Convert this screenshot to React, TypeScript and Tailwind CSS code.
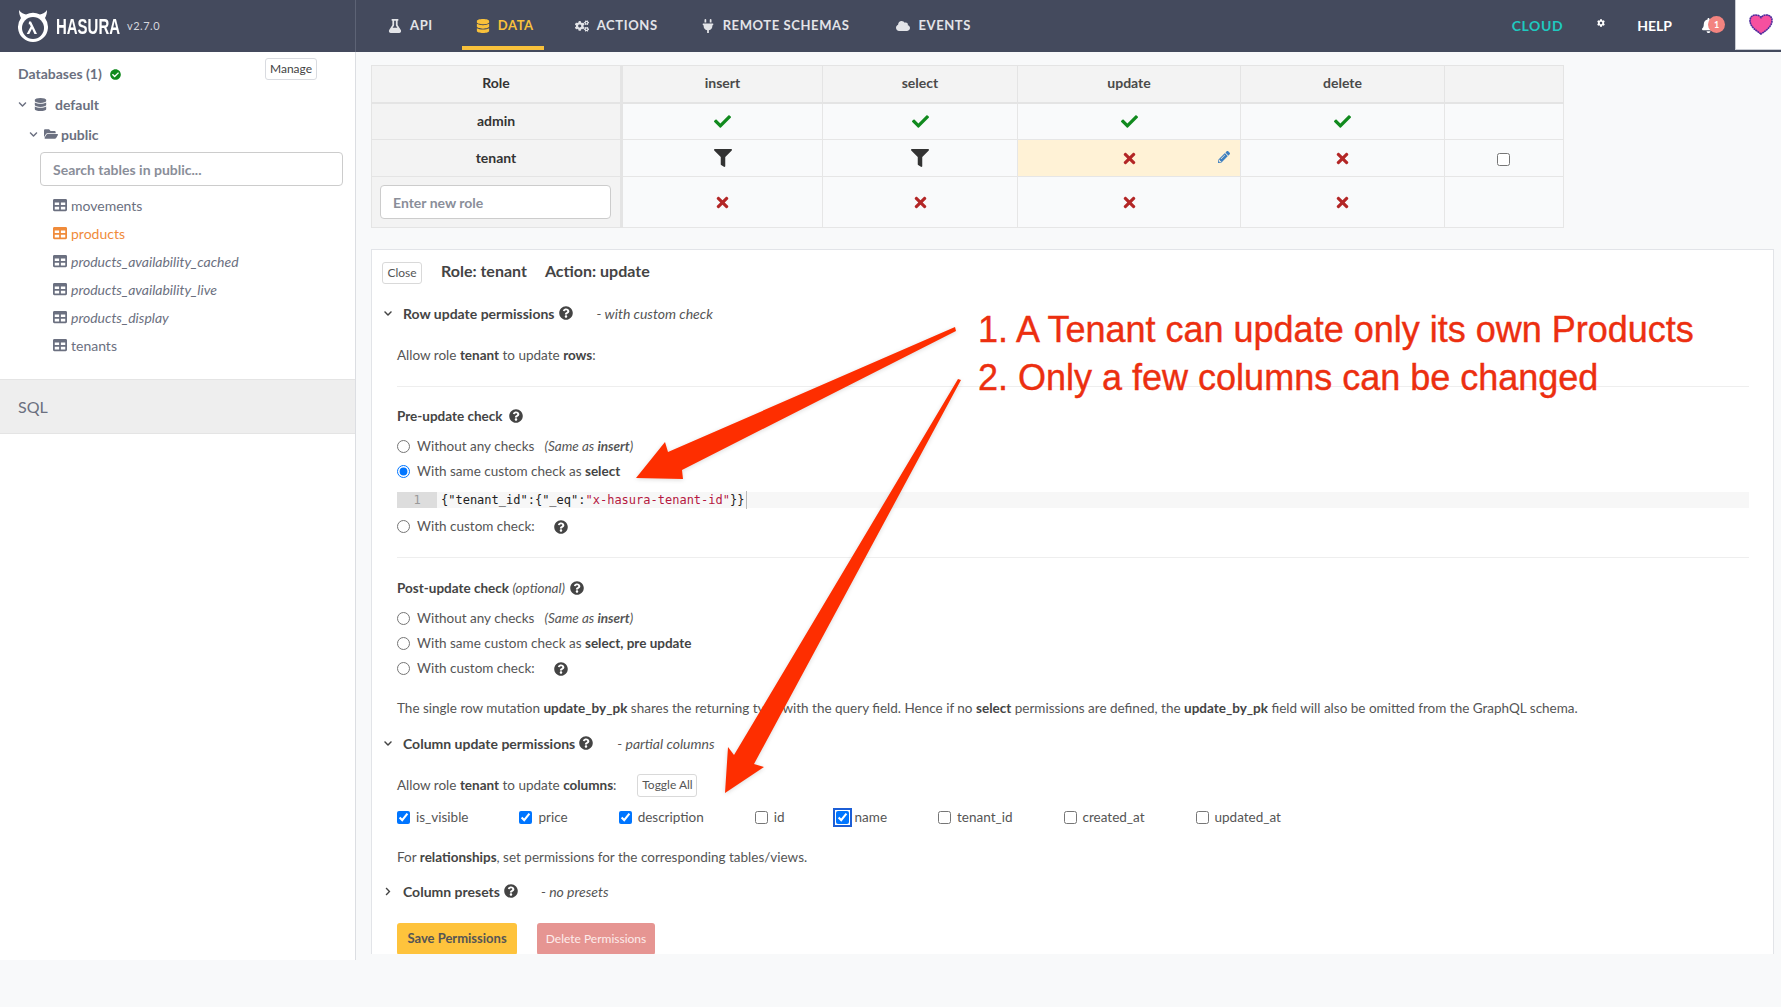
import type { ReactNode } from 'react';
import {
  FaBell, FaCheck, FaCheckCircle, FaChevronDown, FaChevronRight, FaCloud, FaCog, FaCogs, FaDatabase,
  FaFilter, FaFlask, FaFolderOpen, FaPencilAlt, FaPlug, FaQuestionCircle, FaTable, FaTimes,
} from 'react-icons/fa';

const Help = ({ className = '' }: { className?: string }) => (
  <FaQuestionCircle className={`inline-block text-[14px] text-[#444] ${className}`} />
);

const Logo = () => (
  <svg width="34" height="36" viewBox="0 0 34 36" className="shrink-0">
    <path d="M3 2 C3 6 4 8 5 10 A15 15 0 1 0 29 10 C30 8 31 6 31 2 C29 5 26 6 24 6.5 A15 15 0 0 0 10 6.5 C8 6 5 5 3 2 Z" fill="#fff" />
    <circle cx="17" cy="20" r="11" fill="#444a5d" />
    <path d="M13 13.5 h2 l6 12.5 h-2.6 l-2.4 -5.2 l-2.7 5.2 h-2.6 l4 -7.4 l-1 -2.4 h-1 z" fill="#fff" />
  </svg>
);

const navItems = [
  { label: 'API', Icon: FaFlask, pad: 'pl-[13px] pr-[13px]' },
  { label: 'DATA', Icon: FaDatabase, pad: 'pl-[14px] pr-[10px]', active: true },
  { label: 'ACTIONS', Icon: FaCogs, pad: 'pl-[15px] pr-[13px]' },
  { label: 'REMOTE SCHEMAS', Icon: FaPlug, pad: 'pl-[14px] pr-[14px]' },
  { label: 'EVENTS', Icon: FaCloud, pad: 'pl-[17px] pr-[14px]' },
];

const Header = () => (
  <div className="flex h-[52px] bg-[#444a5d]">
    <div className="flex w-[356px] shrink-0 items-center border-r border-[#5d6375] pl-[16px]">
      <Logo />
      <span className="ml-[6px] w-[64px] origin-left scale-x-[0.68] text-[22px] font-bold text-white font-['Liberation_Sans']">HASURA</span>
      <span className="ml-[7px] text-[11px] tracking-[0.5px] text-[#d5d7dd]">v2.7.0</span>
    </div>
    <div className="ml-[19px] flex gap-[16px]">
      {navItems.map(({ label, Icon, pad, active }) => (
        <div
          key={label}
          className={`flex h-[50px] items-center gap-[8px] border-b-4 pt-[5px] ${pad} ${active ? 'border-[#f8c13b] text-[#f8c13b]' : 'border-transparent text-[#e3e4e8]'}`}
        >
          <Icon className="text-[14px]" />
          <span className="text-[13px] font-bold tracking-[0.6px]">{label}</span>
        </div>
      ))}
    </div>
    <div className="ml-auto flex items-center">
      <span className="mr-[34px] mb-[2px] text-[14px] font-bold tracking-[0.6px] text-[#1ec9c0]">CLOUD</span>
      <FaCog className="mr-[32px] mb-[7px] text-[8px] text-white" />
      <span className="mr-[29px] mb-[1px] text-[14px] font-bold text-white">HELP</span>
      <div className="relative mr-[10px] h-[18px] w-[24px]">
        <FaBell className="absolute left-0 top-[1px] text-[15px] text-white" />
        <span className="absolute left-[7px] top-[-1px] flex h-[17px] w-[17px] items-center justify-center rounded-full bg-[#f38480] text-[9px] font-bold text-white">1</span>
      </div>
      <div className="flex h-[50px] w-[46px] items-center justify-center self-start border-b border-l border-[#c9ccd3] bg-white pl-[4px]">
        <svg width="24" height="21" viewBox="0 0 24 21">
          <path d="M12 20 C6 16 1 12 1 6.5 C1 3 3.5 1 6.5 1 C9 1 11 2 12 3.5 C13 2 15 1 17.5 1 C20.5 1 23 3 23 6.5 C23 12 18 16 12 20 Z" fill="#f6509f" stroke="#4c2a9c" strokeWidth="1.6" strokeDasharray="2 0.4" />
        </svg>
      </div>
    </div>
  </div>
);

const tables = [
  { name: 'movements' },
  { name: 'products', active: true },
  { name: 'products_availability_cached', view: true },
  { name: 'products_availability_live', view: true },
  { name: 'products_display', view: true },
  { name: 'tenants' },
];

const Sidebar = () => (
  <div className="h-[908px] w-[356px] shrink-0 border-r border-[#dcdee2] bg-white text-[#6b7080]">
    <div className="relative flex h-[38px] items-start pl-[18px]">
      <span className="mt-[11px] text-[14px] font-bold">Databases (1)</span>
      <FaCheckCircle className="ml-[8px] mt-[17px] text-[11px] text-[#118a1e]" />
      <button className="absolute left-[265px] top-[6px] h-[22px] w-[52px] rounded-[3px] border border-[#d9dbe0] text-[12px] text-[#444]">Manage</button>
    </div>
    <div className="flex h-[28px] items-center pl-[18px]">
      <FaChevronDown className="text-[9px]" />
      <FaDatabase className="ml-[7px] text-[13px]" />
      <span className="ml-[8px] text-[14px] font-bold">default</span>
    </div>
    <div className="mt-[2px] flex h-[28px] items-center pl-[29px]">
      <FaChevronDown className="text-[9px]" />
      <FaFolderOpen className="ml-[6px] text-[14px]" />
      <span className="ml-[3px] text-[14px] font-bold">public</span>
    </div>
    <div className="ml-[40px] mt-[4px] flex h-[34px] w-[303px] items-center rounded-[4px] border border-[#ccc] pl-[12px] text-[14px] font-bold text-[#8a8e99]">
      Search tables in public...
    </div>
    <div className="mt-[5px]">
      {tables.map(t => (
        <div key={t.name} className={`flex h-[28px] items-center pl-[53px] text-[14px] ${t.active ? 'text-[#f08b3a]' : ''} ${t.view ? 'italic' : ''}`}>
          <FaTable className="mr-[4px] text-[14px]" />
          {t.name}
        </div>
      ))}
    </div>
    <div className="mt-[20px] flex h-[55px] items-center border-y border-[#e4e4e4] bg-[#eeeeee] pl-[18px] text-[16px]">SQL</div>
  </div>
);

const Check = () => <FaCheck className="mx-auto text-[17px] text-[#118a1e]" />;
const Cross = () => <FaTimes className="mx-auto text-[17px] text-[#b32626]" />;
const Filter = () => <FaFilter className="mx-auto text-[18px] text-[#333]" />;

const thCell = 'border border-[#e4e4e4] bg-[#f3f3f3] pb-[2px] text-center text-[14px] font-bold';
const tdCell = 'border border-[#e6e6e6] bg-[#f9fafb] text-center';

const RoleTable = () => (
  <table className="w-[1192px] table-fixed border-collapse text-[#4a4a4a]">
    <colgroup>
      <col className="w-[250px]" />
      <col className="w-[201px]" />
      <col className="w-[195px]" />
      <col className="w-[223px]" />
      <col className="w-[204px]" />
      <col className="w-[119px]" />
    </colgroup>
    <tbody>
      <tr className="h-[37px]">
        <td className={`${thCell} border-r-[3px] border-b-2 text-[#333]`}>Role</td>
        {['insert', 'select', 'update', 'delete', ''].map((h, i) => (
          <td key={i} className={`${thCell} border-b-2`}>{h}</td>
        ))}
      </tr>
      <tr className="h-[37px]">
        <td className={`${thCell} border-r-[3px] text-[#333]`}>admin</td>
        <td className={tdCell}><Check /></td>
        <td className={tdCell}><Check /></td>
        <td className={tdCell}><Check /></td>
        <td className={tdCell}><Check /></td>
        <td className={tdCell} />
      </tr>
      <tr className="h-[37px]">
        <td className={`${thCell} border-r-[3px] text-[#333]`}>tenant</td>
        <td className={tdCell}><Filter /></td>
        <td className={tdCell}><Filter /></td>
        <td className="relative border border-[#e6e6e6] bg-[#fff2d6] text-center">
          <Cross />
          <FaPencilAlt className="absolute right-[10px] top-[11px] text-[12px] text-[#3d7fc1]" />
        </td>
        <td className={tdCell}><Cross /></td>
        <td className={tdCell}>
          <input type="checkbox" className="relative top-[2px] right-[1px] h-[13px] w-[13px]" />
        </td>
      </tr>
      <tr className="h-[51px]">
        <td className={`${thCell} border-r-[3px] px-[8px]`}>
          <div className="mt-[2px] flex h-[34px] w-[231px] items-center rounded-[4px] border border-[#ccc] bg-white pl-[12px] text-[14px] font-bold text-[#8a8e99]">Enter new role</div>
        </td>
        <td className={tdCell}><Cross /></td>
        <td className={tdCell}><Cross /></td>
        <td className={tdCell}><Cross /></td>
        <td className={tdCell}><Cross /></td>
        <td className={tdCell} />
      </tr>
    </tbody>
  </table>
);

const SectionHead = ({ open = true, title, note, noteClass }: { open?: boolean; title: ReactNode; note: string; noteClass: string }) => (
  <div className="flex h-[20px] items-center pl-[11px] text-[14px] text-[#444]">
    {open ? <FaChevronDown className="w-[10px] text-[9px]" /> : <FaChevronRight className="w-[10px] text-[9px]" />}
    <span className="ml-[10px] font-bold">{title}</span>
    <Help className="ml-[4px]" />
    <span className={`${noteClass} italic text-[#555]`}>- {note}</span>
  </div>
);

const Radio = ({ checked, children }: { checked?: boolean; children: ReactNode }) => (
  <label className="flex h-[25px] items-center text-[13.5px]">
    <input type="radio" name="radio-x" defaultChecked={checked} className="mr-[7px] h-[13px] w-[13px]" />
    {children}
  </label>
);

const columns = [
  { name: 'is_visible', on: true },
  { name: 'price', on: true },
  { name: 'description', on: true },
  { name: 'id' },
  { name: 'name', on: true, focus: true },
  { name: 'tenant_id' },
  { name: 'created_at' },
  { name: 'updated_at' },
];

const Rule = () => <div className="h-px w-[1352px] bg-[#eeeeee]" />;

const Panel = () => (
  <div className="mt-[21px] h-[705px] w-[1403px] overflow-hidden border border-b-0 border-[#e2e4e8] bg-white text-[#555]">
    <div className="flex h-[44px] items-start pl-[10px] pt-[9px]">
      <button className="mt-[3px] h-[22px] w-[40px] rounded-[3px] border border-[#d9d9d9] text-[12px]">Close</button>
      <span className="ml-[19px] text-[16px] font-bold text-[#444]">Role: tenant</span>
      <span className="ml-[18px] text-[16px] font-bold text-[#444]">Action: update</span>
    </div>
    <div className="mt-[9px]">
      <SectionHead title="Row update permissions" note="with custom check" noteClass="ml-[24px]" />
    </div>
    <div className="pl-[25px]">
      <p className="mt-[22px] h-[20px] text-[13.5px]">Allow role <b className="font-bold text-[#444]">tenant</b> to update <b className="font-bold text-[#444]">rows</b>:</p>
      <div className="mt-[21px]"><Rule /></div>
      <div className="mt-[19px] flex h-[20px] items-center text-[13.5px] font-bold text-[#444]">Pre-update check <Help className="ml-[6px]" /></div>
      <div className="mt-[8px]">
        <Radio>Without any checks <span className="ml-[10px] italic">(Same as <b className="font-bold">insert</b>)</span></Radio>
        <Radio checked>With same custom check as&nbsp;<b className="font-bold text-[#444]">select</b></Radio>
      </div>
      <div className="mt-[8px] flex h-[16px] w-[1352px] items-center bg-[#f7f7f7] text-[12px] font-['DejaVu_Sans_Mono'] text-[#222]">
        <span className="flex h-full w-[40px] items-center justify-center bg-[#ddd] text-[#999]">1</span>
        <span className="ml-[4px] border-r border-[#bbb] pr-[2px]">{'{"tenant_id":{"_eq":'}<span className="text-[#b5173f]">"x-hasura-tenant-id"</span>{'}}'}</span>
      </div>
      <div className="mt-[6px]">
        <Radio>With custom check: <Help className="ml-[19px]" /></Radio>
      </div>
      <div className="mt-[18px]"><Rule /></div>
      <div className="mt-[20px] flex h-[20px] items-center text-[13.5px] text-[#444]"><span className="font-bold">Post-update check</span>&nbsp;<i className="text-[#555]">(optional)</i><Help className="ml-[5px]" /></div>
      <div className="mt-[8px]">
        <Radio>Without any checks <span className="ml-[10px] italic">(Same as <b className="font-bold">insert</b>)</span></Radio>
        <Radio>With same custom check as&nbsp;<b className="font-bold text-[#444]">select, pre update</b></Radio>
        <Radio>With custom check: <Help className="ml-[19px]" /></Radio>
      </div>
      <p className="mt-[17px] h-[20px] text-[13.5px]">
        The single row mutation <b className="font-bold text-[#444]">update_by_pk</b> shares the returning type with the query field. Hence if no <b className="font-bold text-[#444]">select</b> permissions are defined, the <b className="font-bold text-[#444]">update_by_pk</b> field will also be omitted from the GraphQL schema.
      </p>
    </div>
    <div className="mt-[15px]">
      <SectionHead title="Column update permissions" note="partial columns" noteClass="ml-[24px]" />
    </div>
    <div className="pl-[25px]">
      <div className="mt-[20px] flex h-[24px] items-center text-[13.5px]">
        <span>Allow role <b className="font-bold text-[#444]">tenant</b> to update <b className="font-bold text-[#444]">columns</b>:</span>
        <button className="ml-[21px] h-[23px] w-[60px] rounded-[3px] border border-[#d9d9d9] text-[12px]">Toggle All</button>
      </div>
      <div className="mt-[8px] flex h-[24px] items-center gap-[51px] text-[13.5px]">
        {columns.map(c => (
          <label key={c.name} className="flex items-center gap-[6px]">
            <input type="checkbox" defaultChecked={c.on} className={`h-[13px] w-[13px] ${c.focus ? 'outline-2 outline-offset-1 outline-[#1c5ed6]' : ''}`} />
            {c.name}
          </label>
        ))}
      </div>
      <p className="mt-[18px] h-[20px] text-[13.5px]">For <b className="font-bold text-[#444]">relationships</b>, set permissions for the corresponding tables/views.</p>
    </div>
    <div className="mt-[14px]">
      <SectionHead open={false} title="Column presets" note="no presets" noteClass="ml-[23px]" />
    </div>
    <div className="mt-[22px] flex gap-[20px] pl-[25px]">
      <button className="h-[32px] w-[120px] rounded-[3px] bg-[#fec33c] text-[13px] font-bold text-[#555]">Save Permissions</button>
      <button className="h-[32px] w-[118px] rounded-[3px] bg-[#e69592] text-[12px] text-[#fdeceb]">Delete Permissions</button>
    </div>
  </div>
);

// red arrows and captions drawn on top of the screenshot
const Annotations = () => (
  <>
    <svg className="absolute left-0 top-0 drop-shadow-sm" width="1781" height="1007" viewBox="0 0 1781 1007">
      <path d="M955 327 L956 331 L682 470 L683 479 L636 478 L665 442 L668 452 Z" fill="#fe2e00" />
      <path d="M958 379 L961 380 L754 764 L764 767 L725 793 L728 747 L734 755 Z" fill="#fe2e00" />
    </svg>
    <div className="absolute left-[978px] top-[310px] text-[36px] leading-[40px] whitespace-nowrap text-[#ec2f10] font-['Liberation_Sans'] [-webkit-text-stroke:0.4px_#ec2f10]">1. A Tenant can update only its own Products</div>
    <div className="absolute left-[978px] top-[358px] text-[36px] leading-[40px] whitespace-nowrap text-[#ec2f10] font-['Liberation_Sans'] [-webkit-text-stroke:0.4px_#ec2f10]">2. Only a few columns can be changed</div>
  </>
);

export default function App() {
  return (
    <div className="relative h-[1007px] w-[1781px] overflow-hidden bg-[#f8f9fa] font-['Lato',sans-serif]">
      <Header />
      <div className="flex">
        <Sidebar />
        <div className="pl-[15px] pt-[13px]">
          <RoleTable />
          <Panel />
        </div>
      </div>
      <Annotations />
    </div>
  );
}
